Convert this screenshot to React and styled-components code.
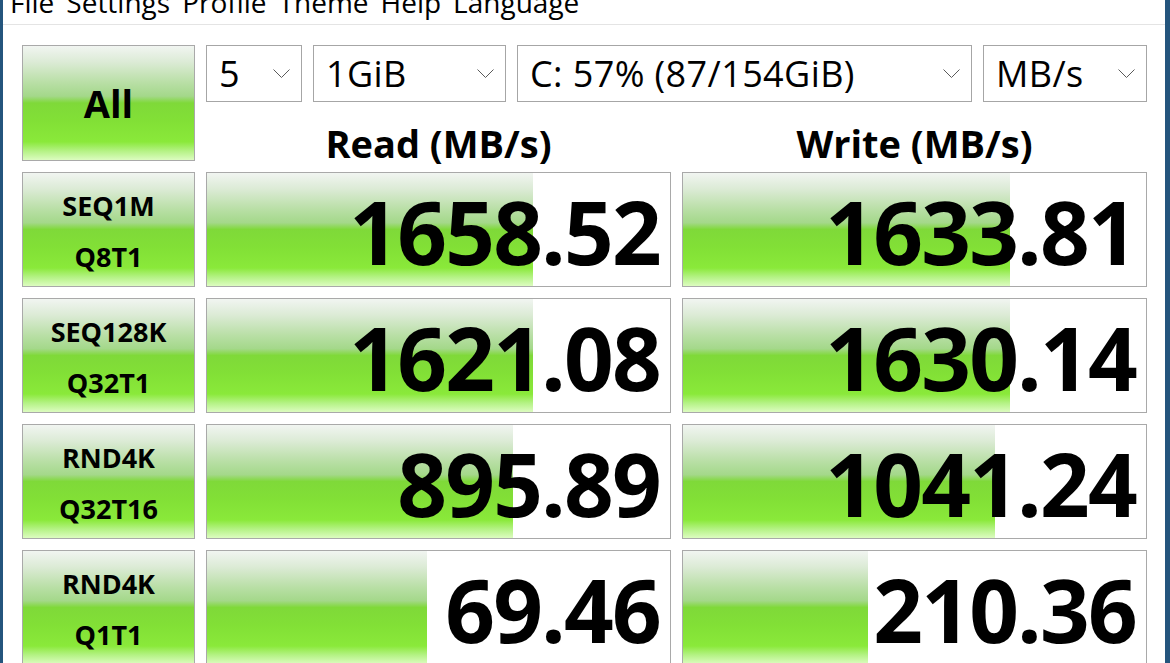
import React from "react";
import styled, { createGlobalStyle } from "styled-components";

const GlobalStyle = createGlobalStyle`
  html, body {
    margin: 0;
    padding: 0;
    background: #ffffff;
    overflow: hidden;
  }
`;

const green = `linear-gradient(
  to bottom,
  #f1f5f1 0%,
  #dcebd6 14%,
  #b9dfa6 32%,
  #a4d88a 44%,
  #7fd939 50%,
  #82e036 66%,
  #8ae93a 84%,
  #b4f284 92%,
  #dcfcc0 100%
)`;

const Window = styled.div`
  box-sizing: border-box;
  width: 1170px;
  height: 663px;
  border-left: 3px solid #24557d;
  border-right: 5px solid #24557d;
  background: #ffffff;
  font-family: "Open Sans", "Noto Sans", sans-serif;
  color: #000;
  overflow: hidden;
`;

const MenuBar = styled.div`
  height: 24px;
  display: flex;
  gap: 12px;
  padding-left: 7px;
  border-bottom: 1px solid #e4e4e4;
  overflow: hidden;
`;

const MenuItem = styled.span`
  font-size: 28px;
  line-height: 28px;
  margin-top: -12px;
  white-space: nowrap;
`;

const Main = styled.div`
  display: grid;
  grid-template-columns: 173px 465px 465px;
  grid-template-rows: 116px repeat(4, 115px);
  column-gap: 11px;
  row-gap: 11px;
  padding: 20px 0 0 19px;
`;

const GreenButton = styled.div`
  box-sizing: border-box;
  border: 1px solid #a9a9a9;
  background: ${green};
  display: flex;
  flex-direction: column;
  align-items: center;
  justify-content: center;
  font-weight: 700;
  font-size: ${(p) => (p.$big ? "38px" : "27px")};
  line-height: ${(p) => (p.$big ? "40px" : "51px")};
  padding-top: ${(p) => (p.$big ? "0" : "3px")};
`;

const TopPanel = styled.div`
  grid-column: 2 / 4;
  display: flex;
  flex-direction: column;
`;

const ComboRow = styled.div`
  display: flex;
  gap: 11px;
  height: 57px;
`;

const Combo = styled.div`
  box-sizing: border-box;
  width: ${(p) => p.$w}px;
  height: 57px;
  border: 1px solid #a6a6a6;
  background: #fff;
  display: flex;
  align-items: center;
  justify-content: space-between;
  padding: 0 11px 0 12px;
  font-size: 36px;
  letter-spacing: 0.4px;
  font-weight: 400;
  white-space: nowrap;
`;

const Chevron = () => (
  <svg width="17" height="9" viewBox="0 0 17 9">
    <polyline points="0.5,0.5 8.5,8.5 16.5,0.5" fill="none" stroke="#5a5a5a" strokeWidth="1" />
  </svg>
);

const Headers = styled.div`
  display: grid;
  grid-template-columns: 465px 465px;
  column-gap: 11px;
`;

const Header = styled.div`
  text-align: center;
  font-size: 38px;
  font-weight: 700;
  line-height: 38px;
  margin-top: 22px;
`;

const ValueBox = styled.div`
  box-sizing: border-box;
  border: 1px solid #a9a9a9;
  background: ${green} no-repeat, #ffffff;
  display: flex;
  align-items: center;
  justify-content: flex-end;
  padding: 4px 10px 0 0;
  font-size: 87px;
  font-weight: 700;
  line-height: 87px;
  letter-spacing: -1.8px;
`;

const rows = [
  { name: "SEQ1M", sub: "Q8T1", read: "1658.52", readFill: 326, write: "1633.81", writeFill: 327 },
  { name: "SEQ128K", sub: "Q32T1", read: "1621.08", readFill: 326, write: "1630.14", writeFill: 327 },
  { name: "RND4K", sub: "Q32T16", read: "895.89", readFill: 306, write: "1041.24", writeFill: 312 },
  { name: "RND4K", sub: "Q1T1", read: "69.46", readFill: 220, write: "210.36", writeFill: 185 },
];

const menu = ["File", "Settings", "Profile", "Theme", "Help", "Language"];

export default function App() {
  return (
    <>
      <GlobalStyle />
      <Window>
        <MenuBar>
          {menu.map((m) => (
            <MenuItem key={m}>{m}</MenuItem>
          ))}
        </MenuBar>
        <Main>
          <GreenButton $big>All</GreenButton>
          <TopPanel>
            <ComboRow>
              <Combo $w={96}>
                5<Chevron />
              </Combo>
              <Combo $w={193}>
                1GiB<Chevron />
              </Combo>
              <Combo $w={455}>
                C: 57% (87/154GiB)<Chevron />
              </Combo>
              <Combo $w={164}>
                MB/s<Chevron />
              </Combo>
            </ComboRow>
            <Headers>
              <Header>Read (MB/s)</Header>
              <Header>Write (MB/s)</Header>
            </Headers>
          </TopPanel>
          {rows.map((r, i) => (
            <React.Fragment key={i}>
              <GreenButton>
                <span>{r.name}</span>
                <span>{r.sub}</span>
              </GreenButton>
              <ValueBox style={{ backgroundSize: `${r.readFill}px 100%, auto` }}>{r.read}</ValueBox>
              <ValueBox style={{ backgroundSize: `${r.writeFill}px 100%, auto` }}>{r.write}</ValueBox>
            </React.Fragment>
          ))}
        </Main>
      </Window>
    </>
  );
}
